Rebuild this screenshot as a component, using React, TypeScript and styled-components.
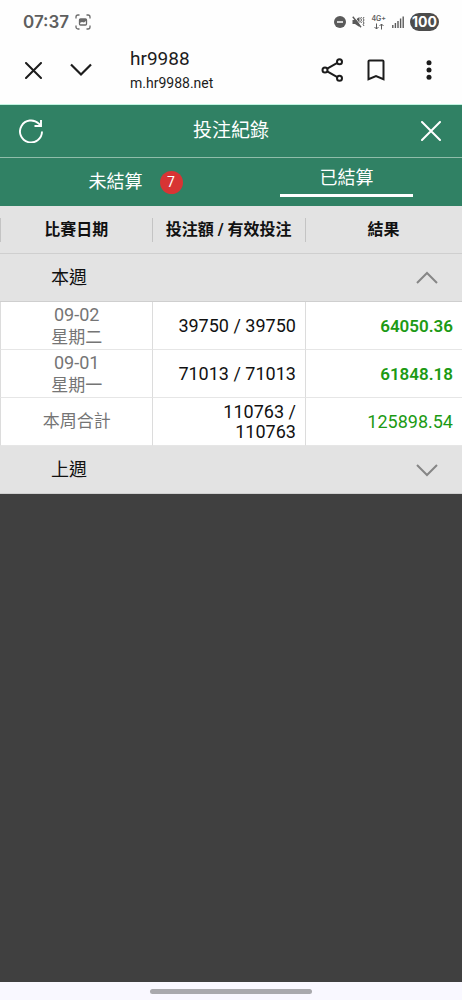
import React, { useState } from "react";
import styled, { createGlobalStyle } from "styled-components";

const GlobalStyle = createGlobalStyle`
  * { box-sizing: border-box; }
  html, body, #root { height: 100%; }
  body {
    margin: 0;
    background: #404040;
    font-family: Roboto, "Noto Sans CJK TC", sans-serif;
  }
  button {
    margin: 0;
    padding: 0;
    border: 0;
    background: none;
    color: inherit;
    font: inherit;
  }
  svg { display: block; }
`;

const Screen = styled.div`
  display: flex;
  flex-direction: column;
  min-height: 100%;
`;

const StatusBar = styled.div`
  display: flex;
  align-items: center;
  justify-content: space-between;
  height: 44px;
  padding: 0 23px;
  background: #fefefe;
  color: #5f5f5f;
`;

const StatusGroup = styled.div<{ $gap: number }>`
  display: flex;
  align-items: center;
  gap: ${(p) => p.$gap}px;
`;

const Clock = styled.span`
  font: 600 17px/20px Inter, sans-serif;
`;

const Battery = styled.span`
  width: 29px;
  border-radius: 9px;
  background: #4c4c4c;
  color: #fff;
  font: 700 14px/18px Inter, sans-serif;
  text-align: center;
`;

const BrowserBar = styled.header`
  display: flex;
  align-items: center;
  height: 61px;
  padding: 0 21px 8px;
  border-bottom: 1px solid #c0f4e0;
  background: #fefefe;
  color: #1c1c1c;
`;

const IconButton = styled.button`
  display: grid;
  place-items: center;
  flex: none;
  width: 24px;
  height: 40px;
`;

const BrowserNav = styled.div`
  display: flex;
  gap: 24px;
`;

const BrowserActions = styled.div`
  display: flex;
  gap: 19px;

  & > :last-child {
    margin-left: 10px;
  }
`;

const PageInfo = styled.div`
  flex: 1;
  min-width: 0;
  padding-left: 37px;
`;

const PageName = styled.div`
  font-size: 19px;
  line-height: 26px;
`;

const PageAddress = styled.div`
  font-size: 14px;
  line-height: 22px;
`;

const TitleBar = styled.div`
  display: flex;
  align-items: center;
  justify-content: space-between;
  height: 53px;
  padding: 0 19px;
  border-bottom: 1px solid #90bdaa;
  background: #308164;
  color: #fff;
`;

const Title = styled.h1`
  margin: 0;
  font-size: 19px;
  font-weight: 400;
  line-height: 28px;
`;

const Tabs = styled.div`
  display: grid;
  grid-template-columns: 1fr 1fr;
  justify-items: center;
  height: 48px;
  padding-bottom: 9px;
  background: #308164;
  color: #fff;
`;

const Tab = styled.button<{ $active: boolean }>`
  width: 58%;
  padding-top: ${(p) => (p.$active ? 4 : 8)}px;
  border-bottom: ${(p) => (p.$active ? "3px solid #fff" : "0")};
  font-size: 18px;
  line-height: 24px;
`;

const TabLabel = styled.span`
  position: relative;
`;

const Badge = styled.span`
  position: absolute;
  top: 0;
  left: calc(100% + 17px);
  width: 23px;
  border-radius: 50%;
  background: #d83434;
  font-size: 14px;
  line-height: 23px;
  text-align: center;
`;

const Records = styled.table`
  width: 100%;
  table-layout: fixed;
  border-collapse: separate;
  border-spacing: 0;
  background: #fff;
`;

const Column = styled.col<{ $share: number }>`
  width: ${(p) => p.$share}%;
`;

const HeadCell = styled.th`
  height: 48px;
  padding: 0;
  border-bottom: 1px solid #cfcfcf;
  background: linear-gradient(#c4c4c4, #c4c4c4) 0 50% / 1px 24px no-repeat #e3e3e3;
  color: #111;
  font-size: 16px;
  font-weight: 700;
  line-height: 24px;
`;

const WeekCell = styled.th`
  height: 48px;
  padding: 0;
  border-bottom: 1px solid #cfcfcf;
  background: #e3e3e3;
  font-weight: 400;
`;

const WeekButton = styled.button`
  display: flex;
  align-items: center;
  justify-content: space-between;
  width: 100%;
  height: 47px;
  padding: 0 23px 0 51px;
  color: #111;
  font-size: 18px;
  line-height: 24px;
`;

const Cell = styled.td`
  height: 48px;
  padding: 0 9px;
  border-left: 1px solid #dcdcdc;
  border-bottom: 1px solid #e6e6e6;
  font-size: 18px;
  line-height: 20px;
  text-align: right;
`;

const DateCell = styled(Cell)`
  padding: 0;
  color: #757575;
  text-align: center;
`;

const DateText = styled.div`
  line-height: 23px;
`;

const DayText = styled.div`
  font-size: 17px;
  line-height: 23px;
`;

const StakeCell = styled(Cell)`
  color: #111;
`;

const ResultCell = styled(Cell)<{ $strong?: boolean }>`
  color: #1c9a14;
  font-size: ${(p) => (p.$strong ? 17 : 18)}px;
  font-weight: ${(p) => (p.$strong ? 600 : 400)};
`;

const Backdrop = styled.div`
  flex: 1;
  background: #404040;
`;

const GestureBar = styled.div`
  display: grid;
  place-items: center;
  height: 18px;
  background: #f9f8ff;
`;

const GestureHandle = styled.div`
  width: 35%;
  height: 5px;
  border-radius: 3px;
  background: #a9a9ad;
`;

function CaptureIcon() {
  return (
    <svg width="16" height="16" viewBox="0 0 16 16" fill="none" stroke="#6a6a6a" strokeWidth="1.3">
      <path d="M1 4.500V3a2 2 0 0 1 2-2h1.500M11.500 1H13a2 2 0 0 1 2 2v1.500M15 11.500V13a2 2 0 0 1-2 2h-1.500M4.500 15H3a2 2 0 0 1-2-2v-1.500" />
      <rect x="4.500" y="5" width="7" height="6" rx="1" />
      <path d="M4.500 9l2.500-1 2 .5 2.500-2V5h-7z" fill="#6a6a6a" stroke="none" />
    </svg>
  );
}

function DoNotDisturbIcon() {
  return (
    <svg width="12" height="12" viewBox="0 0 12 12">
      <circle cx="6" cy="6" r="6" fill="#5a5a5a" />
      <path d="M3 6h6" stroke="#fff" strokeWidth="1.500" />
    </svg>
  );
}

function MutedIcon() {
  return (
    <svg width="13" height="12" viewBox="0 0 13 12" fill="none" stroke="#5a5a5a">
      <path d="M0.500 4h2.500L7.500 1v10L3 8H0.500z" fill="#5a5a5a" stroke="none" />
      <path d="M2 0.500l8 10" stroke="#fefefe" />
      <path d="M0.800 0.800l8.200 10.400" strokeWidth="1.400" />
      <path d="M9.500 1l-.8 1.500.8 1.500-.8 1.500.8 1.500M12 1l-.8 1.500.8 1.500-.8 1.500.8 1.500-.8 1.500.8 1.500" />
    </svg>
  );
}

const Network = styled.span`
  display: grid;
  justify-items: center;
  font: 600 7px/8px Inter, sans-serif;
`;

function DataArrows() {
  return (
    <svg width="10" height="7" viewBox="0 0 10 7" fill="none" stroke="#5a5a5a">
      <path d="M2.500 0.500v5.500M0.500 4l2 2 2-2M7.500 6.500V1M5.500 3l2-2 2 2" />
    </svg>
  );
}

function SignalIcon() {
  return (
    <svg width="12" height="12" viewBox="0 0 12 12" stroke="#5a5a5a" strokeWidth="1.400">
      <path d="M0.800 12v-3M3.400 12V7M6 12V5M8.600 12V2.500M11.200 12V0.500" />
    </svg>
  );
}

function CrossIcon({ size, weight }: { size: number; weight: number }) {
  return (
    <svg width={size} height={size} viewBox={`0 0 ${size} ${size}`} fill="none" stroke="currentColor" strokeWidth={weight} strokeLinecap="round">
      <path d={`M1 1L${size - 1} ${size - 1}M${size - 1} 1L1 ${size - 1}`} />
    </svg>
  );
}

function CollapseIcon() {
  return (
    <svg width="22" height="14" viewBox="0 0 22 14" fill="none" stroke="currentColor" strokeWidth="2.200">
      <path d="M1 1.500l10 10 10-10" />
    </svg>
  );
}

function ShareIcon() {
  return (
    <svg width="24" height="26" viewBox="0 0 24 26" fill="none" stroke="currentColor" strokeWidth="2">
      <circle cx="4" cy="13" r="2.500" />
      <circle cx="18.500" cy="4.700" r="2.500" />
      <circle cx="18.500" cy="21.300" r="2.500" />
      <path d="M6.200 11.700l10.100-5.800M6.200 14.300l10.100 5.800" />
    </svg>
  );
}

function BookmarkIcon() {
  return (
    <svg width="18" height="22" viewBox="0 0 18 22" fill="none" stroke="currentColor" strokeWidth="2">
      <path d="M1.500 20.200V2.500a1 1 0 0 1 1-1h13a1 1 0 0 1 1 1v17.700L9 17z" />
    </svg>
  );
}

function MoreIcon() {
  return (
    <svg width="6" height="20" viewBox="0 0 6 20" fill="currentColor">
      <circle cx="3" cy="2.800" r="2.500" />
      <circle cx="3" cy="10" r="2.500" />
      <circle cx="3" cy="17.200" r="2.500" />
    </svg>
  );
}

function RefreshIcon() {
  return (
    <svg width="24" height="24" viewBox="0 0 24 24" fill="none" stroke="currentColor" strokeWidth="1.900">
      <path d="M23 12.500a11 11 0 1 1-3.200-7.800L21.500 6.500" />
      <path d="M22 1v6h-6.500" />
    </svg>
  );
}

function Chevron({ open }: { open: boolean }) {
  return (
    <svg width="24" height="14" viewBox="0 0 24 14" fill="none" stroke="#868686" strokeWidth="2">
      <path d={open ? "M2 12L12 2l10 10" : "M2 2l10 10L22 2"} />
    </svg>
  );
}

interface DayRecord {
  date: string;
  day: string;
  stake: string;
  result: string;
}

const days: DayRecord[] = [
  { date: "09-02", day: "星期二", stake: "39750 / 39750", result: "64050.36" },
  { date: "09-01", day: "星期一", stake: "71013 / 71013", result: "61848.18" },
];

const tabs = [
  { label: "未結算", count: 7 },
  { label: "已結算", count: 0 },
];

export default function App() {
  const [tab, setTab] = useState(1);
  const [thisWeekOpen, setThisWeekOpen] = useState(true);
  const [lastWeekOpen, setLastWeekOpen] = useState(false);

  return (
    <Screen>
      <GlobalStyle />
      <StatusBar>
        <StatusGroup $gap={6}>
          <Clock>07:37</Clock>
          <CaptureIcon />
        </StatusGroup>
        <StatusGroup $gap={6}>
          <DoNotDisturbIcon />
          <MutedIcon />
          <Network>
            4G+
            <DataArrows />
          </Network>
          <SignalIcon />
          <Battery>100</Battery>
        </StatusGroup>
      </StatusBar>

      <BrowserBar>
        <BrowserNav>
          <IconButton aria-label="Close tab">
            <CrossIcon size={17} weight={2} />
          </IconButton>
          <IconButton aria-label="Minimize">
            <CollapseIcon />
          </IconButton>
        </BrowserNav>
        <PageInfo>
          <PageName>hr9988</PageName>
          <PageAddress>m.hr9988.net</PageAddress>
        </PageInfo>
        <BrowserActions>
          <IconButton aria-label="Share">
            <ShareIcon />
          </IconButton>
          <IconButton aria-label="Bookmark">
            <BookmarkIcon />
          </IconButton>
          <IconButton aria-label="More options">
            <MoreIcon />
          </IconButton>
        </BrowserActions>
      </BrowserBar>

      <TitleBar>
        <IconButton aria-label="重新整理">
          <RefreshIcon />
        </IconButton>
        <Title>投注紀錄</Title>
        <IconButton aria-label="關閉">
          <CrossIcon size={20} weight={2} />
        </IconButton>
      </TitleBar>

      <Tabs role="tablist">
        {tabs.map((item, index) => (
          <Tab key={item.label} role="tab" aria-selected={tab === index} $active={tab === index} onClick={() => setTab(index)}>
            <TabLabel>
              {item.label}
              {item.count > 0 && <Badge>{item.count}</Badge>}
            </TabLabel>
          </Tab>
        ))}
      </Tabs>

      <Records>
        <colgroup>
          <Column $share={33} />
          <Column $share={33} />
          <Column $share={34} />
        </colgroup>
        <thead>
          <tr>
            <HeadCell scope="col">比賽日期</HeadCell>
            <HeadCell scope="col">投注額 / 有效投注</HeadCell>
            <HeadCell scope="col">結果</HeadCell>
          </tr>
        </thead>
        <tbody>
          <tr>
            <WeekCell colSpan={3} scope="rowgroup">
              <WeekButton aria-expanded={thisWeekOpen} onClick={() => setThisWeekOpen(!thisWeekOpen)}>
                本週
                <Chevron open={thisWeekOpen} />
              </WeekButton>
            </WeekCell>
          </tr>
          {thisWeekOpen && (
            <>
              {days.map((row) => (
                <tr key={row.date}>
                  <DateCell>
                    <DateText>{row.date}</DateText>
                    <DayText>{row.day}</DayText>
                  </DateCell>
                  <StakeCell>{row.stake}</StakeCell>
                  <ResultCell $strong>{row.result}</ResultCell>
                </tr>
              ))}
              <tr>
                <DateCell>
                  <DayText>本周合計</DayText>
                </DateCell>
                <StakeCell>110763 / 110763</StakeCell>
                <ResultCell>125898.54</ResultCell>
              </tr>
            </>
          )}
        </tbody>
        <tbody>
          <tr>
            <WeekCell colSpan={3} scope="rowgroup">
              <WeekButton aria-expanded={lastWeekOpen} onClick={() => setLastWeekOpen(!lastWeekOpen)}>
                上週
                <Chevron open={lastWeekOpen} />
              </WeekButton>
            </WeekCell>
          </tr>
        </tbody>
      </Records>

      <Backdrop />
      <GestureBar>
        <GestureHandle />
      </GestureBar>
    </Screen>
  );
}
